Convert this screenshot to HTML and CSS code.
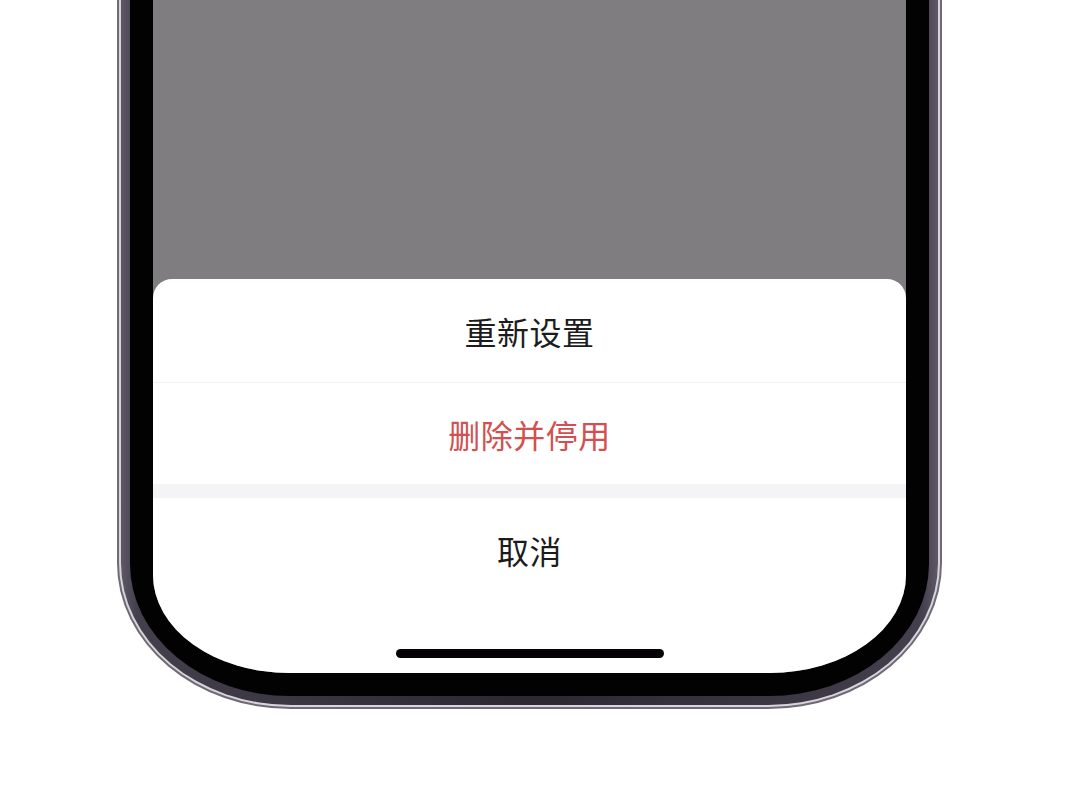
FILE: index.html
```html
<!DOCTYPE html>
<html lang="zh">
<head>
<meta charset="utf-8">
<link rel="stylesheet" href="styles.css">
</head>
<body>
<div class="stage">
  <div class="edge">
    <div class="shine">
      <div class="band">
        <div class="bezel">
          <div class="screen">
            <div class="backdrop"></div>
            <div class="sheet">
              <div class="item">重新设置</div>
              <div class="sep"></div>
              <div class="item item-danger">删除并停用</div>
              <div class="gap"></div>
              <div class="item item-cancel">取消</div>
              <div class="home-area"><div class="home"></div></div>
            </div>
          </div>
        </div>
      </div>
    </div>
  </div>
</div>
</body>
</html>
```
FILE: styles.css
```css
html, body {
  margin: 0;
  padding: 0;
  background: #ffffff;
  width: 1080px;
  height: 794px;
  overflow: hidden;
  font-family: "Noto Sans CJK SC", "Noto Sans", sans-serif;
}
.stage {
  padding-left: 117px;
  width: 825px;
}
.edge {
  background: #6f6a76;
  padding: 0 2px 2px 2px;
  border-radius: 0 0 174px 174px / 0 0 146px 146px;
}
.shine {
  background: #d8d4dc;
  padding: 0 2px 2px 2px;
  border-radius: 0 0 172px 172px / 0 0 144px 144px;
}
.band {
  background: linear-gradient(90deg, #5e5866 0%, #443f4c 2%, #2c2832 50%, #443f4c 98%, #5e5866 100%);
  padding: 0 9px 9px 9px;
  border-radius: 0 0 170px 170px / 0 0 142px 142px;
}
.bezel {
  background: #030203;
  padding: 0 23px 23px 23px;
  border-radius: 0 0 160px 160px / 0 0 132px 132px;
}
.screen {
  height: 673px;
  display: flex;
  flex-direction: column;
  border-radius: 0 0 136px 136px / 0 0 98px 98px;
  overflow: hidden;
  background: #807d81;
}
.backdrop {
  height: 279px;
  background: #807d81;
}
.sheet {
  flex: 1;
  background: #ffffff;
  border-radius: 19px 19px 0 0;
  display: flex;
  flex-direction: column;
}
.item {
  height: 103px;
  display: flex;
  align-items: center;
  justify-content: center;
  font-size: 32px;
  color: #1c1c1c;
  letter-spacing: 0.5px;
}
.item-danger {
  height: 101px;
  color: #d2504f;
}
.sep {
  height: 1px;
  background: #f0eff1;
}
.gap {
  height: 14px;
  background: #f4f3f5;
}
.home-area {
  flex: 1;
  display: flex;
  justify-content: center;
  padding-top: 48px;
}
.home {
  width: 268px;
  height: 9px;
  border-radius: 5px;
  background: #050305;
}
```
